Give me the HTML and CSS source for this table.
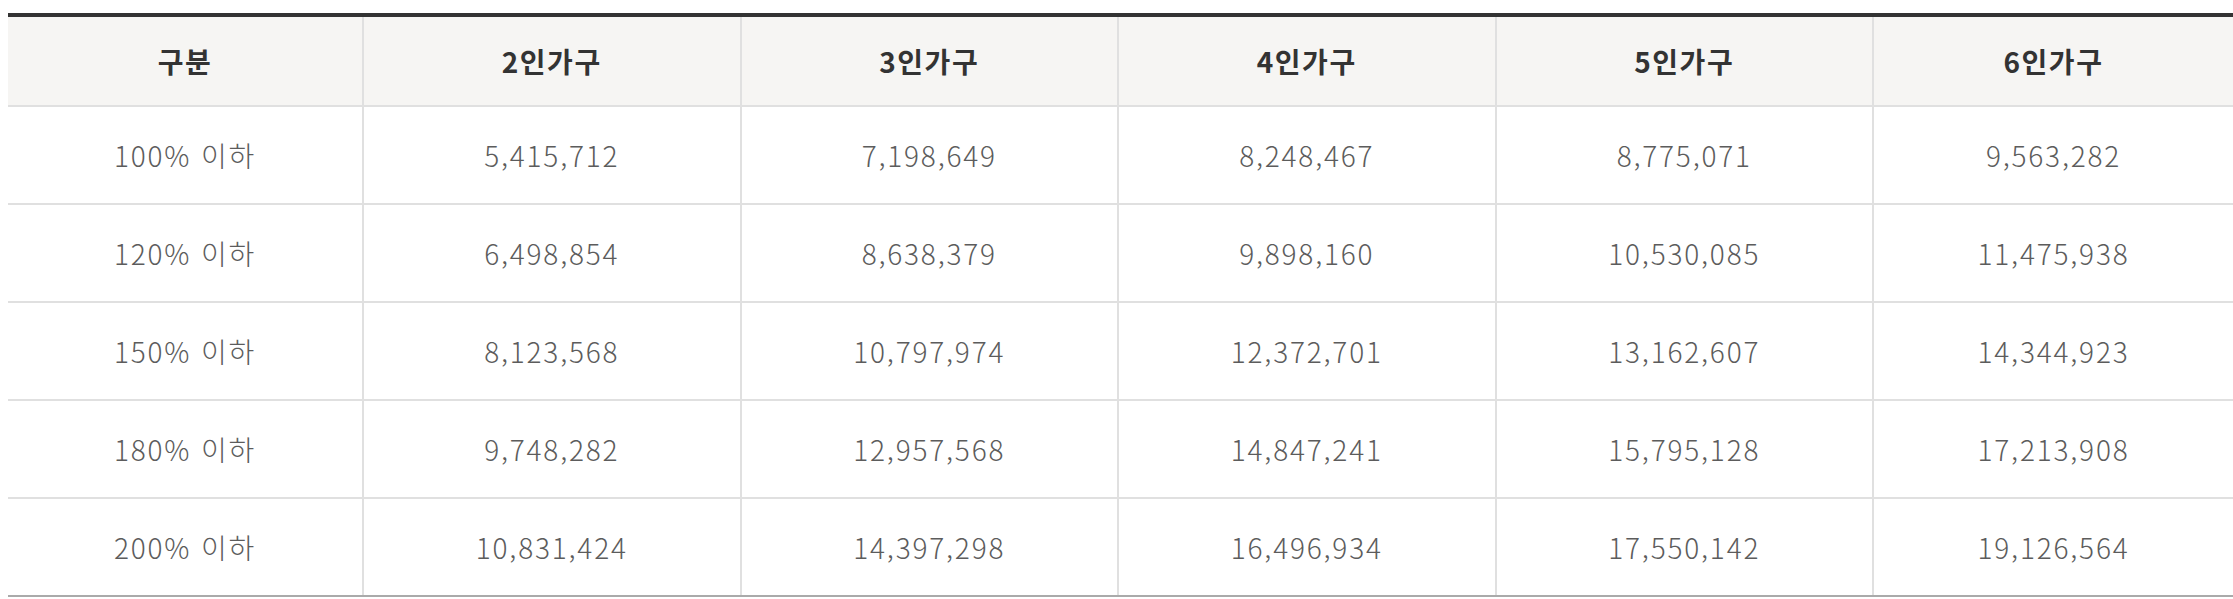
FILE: index.html
```html
<!DOCTYPE html>
<html lang="ko">
<head>
<meta charset="utf-8">
<title>소득기준표</title>
<link rel="stylesheet" href="styles.css">
</head>
<body>
<div class="wrap">
<table class="income">
<colgroup>
<col class="c1"><col class="cn"><col class="cn"><col class="cn"><col class="cn"><col>
</colgroup>
<thead>
<tr><th>구분</th><th>2인가구</th><th>3인가구</th><th>4인가구</th><th>5인가구</th><th>6인가구</th></tr>
</thead>
<tbody>
<tr><td>100% 이하</td><td>5,415,712</td><td>7,198,649</td><td>8,248,467</td><td>8,775,071</td><td>9,563,282</td></tr>
<tr><td>120% 이하</td><td>6,498,854</td><td>8,638,379</td><td>9,898,160</td><td>10,530,085</td><td>11,475,938</td></tr>
<tr><td>150% 이하</td><td>8,123,568</td><td>10,797,974</td><td>12,372,701</td><td>13,162,607</td><td>14,344,923</td></tr>
<tr><td>180% 이하</td><td>9,748,282</td><td>12,957,568</td><td>14,847,241</td><td>15,795,128</td><td>17,213,908</td></tr>
<tr><td>200% 이하</td><td>10,831,424</td><td>14,397,298</td><td>16,496,934</td><td>17,550,142</td><td>19,126,564</td></tr>
</tbody>
</table>
</div>
</body>
</html>
```
FILE: styles.css
```css
html, body {
  margin: 0;
  padding: 0;
  background: #fff;
}
.wrap {
  padding: 13px 0 0 8px;
}
.income {
  width: 100%;
  table-layout: fixed;
  border-collapse: collapse;
  font-family: "Noto Sans CJK KR", "Noto Sans", sans-serif;
  font-size: 28px;
  border-top: 4px solid #333;
}
.income .c1 { width: 355px; }
.income .cn { width: 377.5px; }
.income th,
.income td {
  text-align: center;
  padding: 0;
  border-left: 2px solid #e0e0e0;
  border-bottom: 2px solid #e0e0e0;
}
.income th:first-child,
.income td:first-child {
  border-left: none;
}
.income th {
  height: 88px;
  background: #f6f5f3;
  color: #333;
  font-weight: 700;
  letter-spacing: 1.5px;
}
.income td {
  height: 96px;
  color: #5c5c5c;
  font-weight: 300;
  letter-spacing: 1.8px;
}
.income tbody tr:last-child td {
  border-bottom: 2px solid #aaa;
}
```
